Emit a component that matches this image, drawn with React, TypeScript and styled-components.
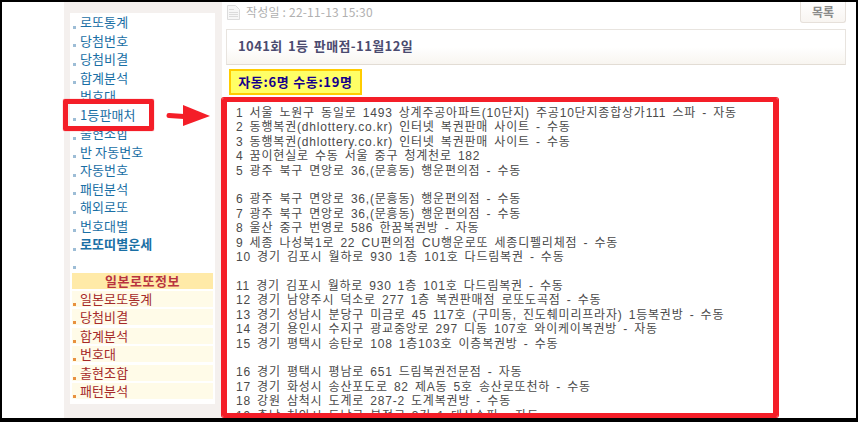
import React from 'react';
import styled, { createGlobalStyle } from 'styled-components';

const GlobalStyle = createGlobalStyle`
  html, body {
    margin: 0;
    padding: 0;
    background: #fff;
    overflow: hidden;
  }
  * {
    box-sizing: border-box;
  }
`;

const Screen = styled.div`
  position: relative;
  width: 858px;
  height: 422px;
  overflow: hidden;
  background: #fff;
  border-style: solid;
  border-color: #000;
  border-width: 2px 2px 4px 2px;
  display: flex;
  font-family: 'Noto Sans CJK KR', 'Liberation Sans', sans-serif;
`;

const Gutter = styled.div`
  width: 62px;
  flex: none;
`;

const Sidebar = styled.aside`
  width: 158px;
  flex: none;
  background: #f4f0ee;
  padding: 11px 7px 0 6px;
`;

const Panel = styled.nav`
  width: 145px;
  height: 391px;
  background: #fff;
  padding: 0 2px;
`;

const MenuRow = styled.div<{ $jp?: boolean; $bold?: boolean }>`
  position: relative;
  height: ${(p) => (p.$jp ? '16px' : '18.5px')};
  margin-bottom: ${(p) => (p.$jp ? '2.4px' : '0')};
  padding-left: 8px;
  font-size: 13px;
  font-weight: ${(p) => (p.$bold ? 700 : 400)};
  line-height: ${(p) => (p.$jp ? '16px' : '18.5px')};
  letter-spacing: 0.1px;
  white-space: nowrap;
  color: ${(p) => (p.$jp ? '#a52a2a' : '#1a6fa5')};
  background: ${(p) => (p.$jp ? '#fffbe8' : 'transparent')};

  &::before {
    content: '';
    position: absolute;
    left: 1px;
    bottom: ${(p) => (p.$jp ? '1px' : '3px')};
    width: 3px;
    height: 3px;
    background: ${(p) => (p.$jp ? '#e8913f' : '#9dbdd6')};
  }
`;

const JpHeader = styled.div`
  height: 16px;
  margin: 1px 0 2px;
  background: #ffeaa8;
  color: #b8333f;
  font-size: 13px;
  font-weight: 700;
  line-height: 16px;
  letter-spacing: 0.5px;
  text-align: center;
`;

const Main = styled.main`
  flex: 1;
  min-width: 0;
  display: flex;
  flex-direction: column;
  padding-left: 4px;

  & > * {
    flex: none;
  }
`;

const MetaBar = styled.div`
  height: 27px;
  width: 620px;
  display: flex;
  align-items: flex-start;
  justify-content: space-between;
`;

const MetaLeft = styled.div`
  display: flex;
  align-items: center;
  gap: 5px;
  margin-top: 2px;
  color: #b0b0b0;
  font-size: 12px;
  line-height: 16px;
  letter-spacing: 0.2px;
`;

const ListButton = styled.div`
  width: 46px;
  height: 21px;
  margin-right: 0;
  border: 1px solid #e6e0da;
  border-top: 0;
  border-radius: 0 0 3px 3px;
  background: linear-gradient(#fff, #f8f5f1);
  color: #8a8a8a;
  font-size: 12px;
  font-weight: 700;
  line-height: 20px;
  text-align: center;
`;

const TitleBox = styled.div`
  width: 620px;
  height: 36px;
  border: 1px solid #e8e4df;
  border-bottom-color: #e2dcd4;
  background: linear-gradient(#fff 50%, #f8f5f0);
  padding-left: 11px;
  color: #4b4b70;
  font-size: 13px;
  font-weight: 700;
  line-height: 31px;
  letter-spacing: 0.4px;
  word-spacing: 2px;
`;

const CountBadge = styled.div`
  align-self: flex-start;
  margin: 4px 0 0 3px;
  width: 133px;
  height: 26px;
  border: 2px solid #ffcc00;
  background: #ffff66;
  color: #14008c;
  font-size: 13px;
  font-weight: 700;
  line-height: 22px;
  letter-spacing: 0.7px;
  text-align: center;
  white-space: nowrap;
`;

const Winners = styled.div`
  margin: 11px 0 0 10px;
  color: #4a4a4a;
  font-family: 'Liberation Sans', 'Noto Sans CJK KR', sans-serif;
  font-size: 12px;
  line-height: 14.4px;
  letter-spacing: 0.8px;
  word-spacing: 2px;
  white-space: pre;
`;

const RedBox = styled.div<{ $small?: boolean }>`
  position: absolute;
  border-style: solid;
  border-color: #f41e28;
  border-width: ${(p) => (p.$small ? '5px' : '4px 5px 4px 5px')};
  border-radius: 2px;
  box-shadow: 0 0 1px #f41e28;
  pointer-events: none;
`;

const SideMark = styled(RedBox)`
  left: 61px;
  top: 97px;
  width: 91px;
  height: 32px;
`;

const ListMark = styled(RedBox)`
  left: 220px;
  top: 96px;
  width: 556px;
  height: 319px;
  box-shadow: 0 0 0 1px #f41e28;
`;

const Arrow = styled.svg`
  position: absolute;
  left: 164px;
  top: 102px;
`;

const DocIcon = () => (
  <svg width="15" height="15" viewBox="0 0 15 15" fill="none" stroke="#dcdcdc">
    <path d="M1.5 0.5h8l4 4v10h-12z" fill="#f7f7f7" />
    <path d="M3 4.5h5M3 7.5h9M3 9.5h9M3 11.5h9" />
  </svg>
);

const menu = [
  '로또통계',
  '당첨번호',
  '당첨비결',
  '합계분석',
  '번호대',
  '1등판매처',
  '출현조합',
  '반 자동번호',
  '자동번호',
  '패턴분석',
  '해외로또',
  '번호대별',
];

const japanMenu = ['일본로또통계', '당첨비결', '합계분석', '번호대', '출현조합', '패턴분석'];

const winners = `1 서울 노원구 동일로 1493 상계주공아파트(10단지) 주공10단지종합상가111 스파 - 자동
2 동행복권(dhlottery.co.kr) 인터넷 복권판매 사이트 - 수동
3 동행복권(dhlottery.co.kr) 인터넷 복권판매 사이트 - 수동
4 꿈이현실로 수동 서울 중구 청계천로 182
5 광주 북구 면앙로 36,(문흥동) 행운편의점 - 수동

6 광주 북구 면앙로 36,(문흥동) 행운편의점 - 수동
7 광주 북구 면앙로 36,(문흥동) 행운편의점 - 수동
8 울산 중구 번영로 586 한꿈복권방 - 자동
9 세종 나성북1로 22 CU편의점 CU행운로또 세종디펠리체점 - 수동
10 경기 김포시 월하로 930 1층 101호 다드림복권 - 수동

11 경기 김포시 월하로 930 1층 101호 다드림복권 - 수동
12 경기 남양주시 덕소로 277 1층 복권판매점 로또도곡점 - 수동
13 경기 성남시 분당구 미금로 45 117호 (구미동, 진도췌미리프라자) 1등복권방 - 수동
14 경기 용인시 수지구 광교중앙로 297 디동 107호 와이케이복권방 - 자동
15 경기 평택시 송탄로 108 1층103호 이층복권방 - 수동

16 경기 평택시 평남로 651 드림복권전문점 - 자동
17 경기 화성시 송산포도로 82 제A동 5호 송산로또천하 - 수동
18 강원 삼척시 도계로 287-2 도계복권방 - 수동
19 충남 천안시 동남구 봉정로 3길 1 대산슈퍼 - 자동`;

const App: React.FC = () => (
  <>
    <GlobalStyle />
    <Screen>
      <Gutter />
      <Sidebar>
        <Panel>
          {menu.map((label) => (
            <MenuRow key={label}>{label}</MenuRow>
          ))}
          <MenuRow $bold>로또띠별운세</MenuRow>
          <MenuRow />
          <JpHeader>일본로또정보</JpHeader>
          {japanMenu.map((label) => (
            <MenuRow $jp key={label}>
              {label}
            </MenuRow>
          ))}
        </Panel>
      </Sidebar>
      <Main>
        <MetaBar>
          <MetaLeft>
            <DocIcon />
            작성일 : 22-11-13 15:30
          </MetaLeft>
          <ListButton>목록</ListButton>
        </MetaBar>
        <TitleBox>1041회 1등 판매점-11월12일</TitleBox>
        <CountBadge>자동:6명 수동:19명</CountBadge>
        <Winners>{winners}</Winners>
      </Main>
      <SideMark $small />
      <ListMark />
      <Arrow width="46" height="24" viewBox="0 0 46 24">
        <path d="M3 11.5l15 1" stroke="#f41e28" strokeWidth="5" strokeLinecap="round" />
        <path d="M17 1l27 11-27 10z" fill="#f41e28" />
      </Arrow>
    </Screen>
  </>
);

export default App;
